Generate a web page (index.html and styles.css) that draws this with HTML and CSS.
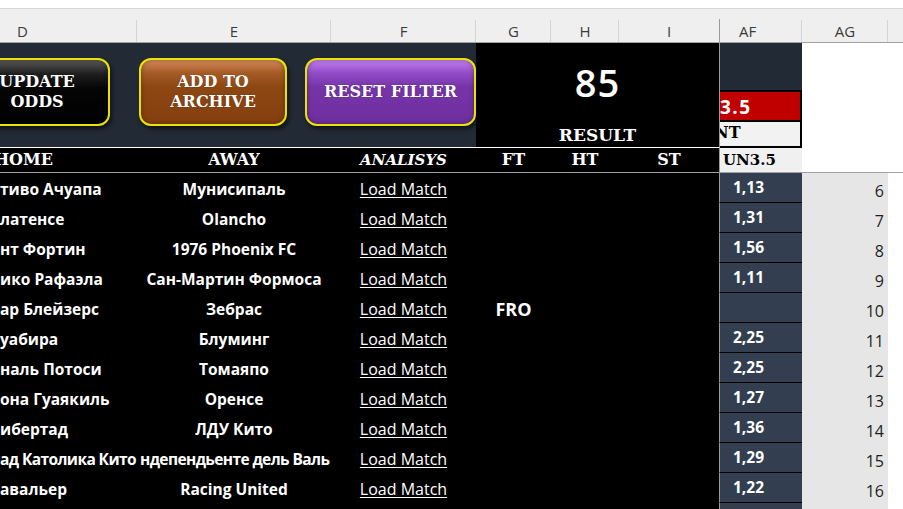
FILE: index.html
```html
<!DOCTYPE html>
<html>
<head>
<meta charset="utf-8">
<link rel="stylesheet" href="styles.css">
</head>
<body>
<div class="sheet">
  <div class="topstrip"></div>
  <div class="grid colheads">
    <div class="ch ch-d">D</div>
    <div class="ch">E</div>
    <div class="ch">F</div>
    <div class="ch">G</div>
    <div class="ch">H</div>
    <div class="ch ch-i">I</div>
    <div class="ch ch-af">AF</div>
    <div class="ch">AG</div>
    <div class="ch ch-rest"></div>
  </div>

  <div class="grid banner">
    <div class="btnarea">
      <div class="btn btn-black">UPDATE<br>ODDS</div>
      <div class="btn btn-brown">ADD TO<br>ARCHIVE</div>
      <div class="btn btn-purple">RESET FILTER</div>
    </div>
    <div class="result">
      <div class="score">85</div>
      <div class="result-label">RESULT</div>
    </div>
    <div class="afhead">
      <div class="af-dark"></div>
      <div class="af-red">3.5</div>
      <div class="af-light">NT</div>
    </div>
    <div class="aghead"></div>
    <div class="resthead"></div>
  </div>

  <div class="grid labels">
    <div class="lab lab-home">HOME</div>
    <div class="lab">AWAY</div>
    <div class="lab lab-it">ANALISYS</div>
    <div class="lab">FT</div>
    <div class="lab">HT</div>
    <div class="lab">ST</div>
    <div class="lab-af">UN3.5</div>
    <div class="lab-ag"></div>
    <div></div>
  </div>
  <div class="freeze"></div>

  <div class="grid row"><div class="home">тиво Ачуапа</div><div class="away"><span>Мунисипаль</span></div><div class="load">Load Match</div><div class="g"></div><div class="h"></div><div class="i"></div><div class="af"><span>1,13</span></div><div class="ag">6</div><div></div></div>
  <div class="grid row"><div class="home">латенсе</div><div class="away"><span>Olancho</span></div><div class="load">Load Match</div><div class="g"></div><div class="h"></div><div class="i"></div><div class="af"><span>1,31</span></div><div class="ag">7</div><div></div></div>
  <div class="grid row"><div class="home">нт Фортин</div><div class="away"><span>1976 Phoenix FC</span></div><div class="load">Load Match</div><div class="g"></div><div class="h"></div><div class="i"></div><div class="af"><span>1,56</span></div><div class="ag">8</div><div></div></div>
  <div class="grid row"><div class="home">ико Рафаэла</div><div class="away"><span>Сан-Мартин Формоса</span></div><div class="load">Load Match</div><div class="g"></div><div class="h"></div><div class="i"></div><div class="af"><span>1,11</span></div><div class="ag">9</div><div></div></div>
  <div class="grid row"><div class="home">ар Блейзерс</div><div class="away"><span>Зебрас</span></div><div class="load">Load Match</div><div class="g">FRO</div><div class="h"></div><div class="i"></div><div class="af"><span></span></div><div class="ag">10</div><div></div></div>
  <div class="grid row"><div class="home">уабира</div><div class="away"><span>Блуминг</span></div><div class="load">Load Match</div><div class="g"></div><div class="h"></div><div class="i"></div><div class="af"><span>2,25</span></div><div class="ag">11</div><div></div></div>
  <div class="grid row"><div class="home">наль Потоси</div><div class="away"><span>Томаяпо</span></div><div class="load">Load Match</div><div class="g"></div><div class="h"></div><div class="i"></div><div class="af"><span>2,25</span></div><div class="ag">12</div><div></div></div>
  <div class="grid row"><div class="home">она Гуаякиль</div><div class="away"><span>Оренсе</span></div><div class="load">Load Match</div><div class="g"></div><div class="h"></div><div class="i"></div><div class="af"><span>1,27</span></div><div class="ag">13</div><div></div></div>
  <div class="grid row"><div class="home">ибертад</div><div class="away"><span>ЛДУ Кито</span></div><div class="load">Load Match</div><div class="g"></div><div class="h"></div><div class="i"></div><div class="af"><span>1,36</span></div><div class="ag">14</div><div></div></div>
  <div class="grid row"><div class="home tight">ад Католика Кито</div><div class="away tight"><span>ндепендьенте дель Валь</span></div><div class="load">Load Match</div><div class="g"></div><div class="h"></div><div class="i"></div><div class="af"><span>1,29</span></div><div class="ag">15</div><div></div></div>
  <div class="grid row"><div class="home">авальер</div><div class="away"><span>Racing United</span></div><div class="load">Load Match</div><div class="g"></div><div class="h"></div><div class="i"></div><div class="af"><span>1,22</span></div><div class="ag">16</div><div></div></div>
  <div class="grid row"><div class="home"></div><div class="away"></div><div class="load"></div><div class="g"></div><div class="h"></div><div class="i"></div><div class="af"><span></span></div><div class="ag"></div><div></div></div>
</div>
</body>
</html>
```

FILE: styles.css
```css
html, body {
  margin: 0;
  padding: 0;
  background: #fff;
}
.sheet {
  width: 903px;
  height: 509px;
  overflow: hidden;
  font-family: "Open Sans", "DejaVu Sans", sans-serif;
}
.grid {
  display: grid;
  grid-template-columns: 137px 194px 145px 75px 68px 100px 83px 86px 1fr;
}
.topstrip {
  height: 8px;
  border-bottom: 1px solid #d6d6d6;
  background: #fff;
}

/* column letters */
.colheads {
  height: 33px;
  background: #efefef;
  border-bottom: 1px solid #a3a3a3;
}
.ch {
  font-size: 15px;
  line-height: 20px;
  padding-top: 12px;
  color: #3b3b3b;
  text-align: center;
  background: linear-gradient(#d4d4d4, #d4d4d4) right bottom / 1px 22px no-repeat;
}
.ch-d {
  text-align: left;
  padding-left: 17px;
}
.ch-i {
  background: none;
}
.ch-af {
  text-align: left;
  padding-left: 20px;
  background:
    linear-gradient(#9a9a9a, #9a9a9a) left bottom / 1px 23px no-repeat,
    linear-gradient(#d4d4d4, #d4d4d4) right bottom / 1px 22px no-repeat;
}
.ch-rest {
  background: none;
}

/* banner */
.banner {
  height: 105px;
}
.btnarea {
  grid-column: 1 / 4;
  background: #222a35;
  border-bottom: 1px solid #fff;
  display: flex;
  align-items: flex-start;
  padding-top: 15px;
  box-sizing: border-box;
  overflow: hidden;
}
.btn {
  flex: none;
  height: 68px;
  box-sizing: border-box;
  border: 2px solid #e8e400;
  border-radius: 12px;
  display: flex;
  align-items: center;
  justify-content: center;
  text-align: center;
  color: #fff;
  font-family: "DejaVu Serif", serif;
  font-weight: bold;
  font-size: 16px;
  line-height: 20px;
  box-shadow: 2px 3px 4px rgba(0, 0, 0, 0.55), inset 0 0 5px rgba(0, 0, 0, 0.35);
  text-shadow: 0 0 1px rgba(0, 0, 0, 0.5);
}
.btn-black {
  width: 146px;
  margin-left: -36px;
  background: linear-gradient(#5a5a5a 0%, #1e1e1e 22%, #050505 45%, #000 100%);
}
.btn-brown {
  width: 148px;
  margin-left: 29px;
  background: linear-gradient(#d68c5c 0%, #a65b26 20%, #8d4713 42%, #853f0f 100%);
}
.btn-purple {
  width: 171px;
  margin-left: 18px;
  background: linear-gradient(#c680f2 0%, #914dc8 20%, #7634a8 42%, #6f2f9f 100%);
}

.result {
  grid-column: 4 / 7;
  background: #000;
  border-bottom: 1px solid #fff;
  box-sizing: border-box;
  display: flex;
  flex-direction: column;
  align-items: center;
  padding-top: 19px;
  color: #fff;
}
.score {
  font-size: 38px;
  font-weight: 600;
  line-height: 40px;
  letter-spacing: 1px;
}
.result-label {
  margin-top: 23px;
  font-family: "DejaVu Serif", serif;
  font-weight: bold;
  font-size: 17px;
  line-height: 20px;
}

.afhead {
  border-left: 1px solid #9a9a9a;
  display: flex;
  flex-direction: column;
}
.af-dark {
  height: 47px;
  background: #222a35;
  border-bottom: 2px solid #000;
}
.af-red {
  height: 30px;
  box-sizing: border-box;
  background: #c00000;
  border-bottom: 2px solid #000;
  border-right: 2px solid #000;
  color: #fff;
  font-weight: bold;
  font-size: 19px;
  line-height: 28px;
  letter-spacing: 1.5px;
  padding-top: 1px;
  overflow: hidden;
  white-space: nowrap;
}
.af-light {
  height: 26px;
  box-sizing: border-box;
  background: #f2f2f2;
  border-bottom: 2px solid #000;
  border-right: 2px solid #000;
  font-family: "DejaVu Serif", serif;
  font-weight: bold;
  font-size: 16px;
  line-height: 22px;
  color: #000;
  text-indent: -6px;
  overflow: hidden;
  white-space: nowrap;
}
.aghead, .resthead {
  background: #fff;
}

/* labels row */
.labels {
  height: 24px;
}
.lab {
  background: #000;
  color: #fff;
  font-family: "DejaVu Serif", serif;
  font-weight: bold;
  font-size: 16px;
  line-height: 24px;
  text-align: center;
  overflow: hidden;
  white-space: nowrap;
}
.lab-home {
  text-align: left;
  text-indent: -6px;
}
.lab-it {
  font-style: italic;
  font-size: 15px;
}
.lab-af {
  border-left: 1px solid #9a9a9a;
  background: #f0f0f0;
  color: #000;
  font-family: "DejaVu Serif", serif;
  font-weight: bold;
  font-size: 15px;
  line-height: 24px;
  padding-left: 3px;
  white-space: nowrap;
  overflow: hidden;
}
.lab-ag {
  background: #fff;
}
.freeze {
  height: 1px;
  background: #a0a0a0;
}

/* data rows */
.row {
  height: 30px;
}
.row > div {
  overflow: hidden;
  white-space: nowrap;
}
.home, .away, .load, .g, .h, .i {
  background: #000;
  color: #fff;
  font-size: 15.5px;
  line-height: 30px;
  padding-top: 1px;
  box-sizing: border-box;
}
.home, .away {
  font-weight: bold;
}
.away {
  display: flex;
  justify-content: center;
}
.away span {
  flex: none;
}
.tight {
  letter-spacing: -0.6px;
}
.away.tight {
  justify-content: flex-start;
  padding-left: 3px;
}
.load {
  text-align: center;
  font-size: 16px;
  text-decoration: underline;
  text-underline-offset: 2px;
  text-decoration-thickness: 1px;
}
.g {
  text-align: center;
  font-weight: bold;
  font-size: 18px;
}
.af {
  border-left: 1px solid #9a9a9a;
  background: #333f50;
  border-bottom: 1px solid #000;
  box-sizing: border-box;
  color: #fff;
  font-weight: bold;
  font-size: 15.5px;
  line-height: 29px;
  padding-left: 13px;
}
.ag {
  background: #e6e6e6;
  color: #1e1e1e;
  font-size: 16px;
  line-height: 30px;
  padding-top: 3px;
  padding-right: 4px;
  box-sizing: border-box;
  text-align: right;
}
```
